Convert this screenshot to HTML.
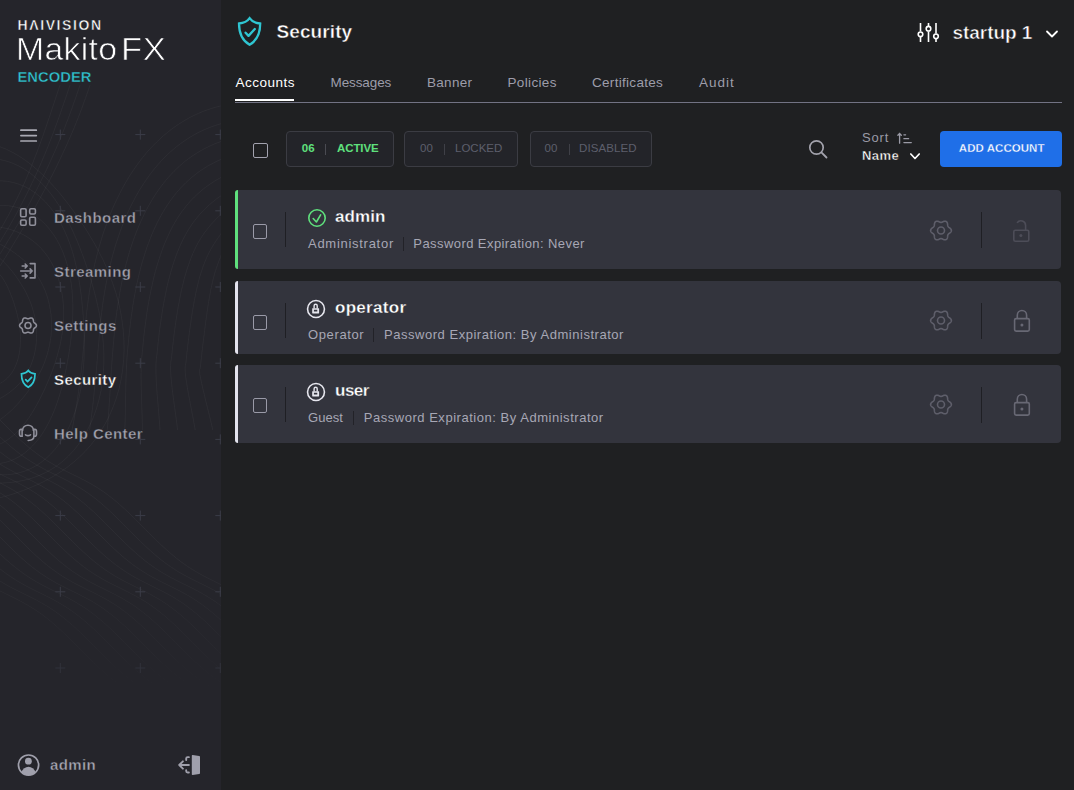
<!DOCTYPE html>
<html><head><meta charset="utf-8">
<style>
html,body{margin:0;padding:0;width:1074px;height:790px;overflow:hidden;background:#1f2022;}
body{position:relative;font-family:"Liberation Sans",sans-serif;}
.t{position:absolute;white-space:nowrap;line-height:1;}
</style></head><body>
<div style="position:absolute;left:0px;top:0px;width:221px;height:790px;background:#25252b"></div>
<div style="position:absolute;left:235px;top:102px;width:827px;height:1px;background:#727384"></div>
<div style="position:absolute;left:235px;top:99px;width:59px;height:2px;background:#ffffff"></div>
<div style="position:absolute;left:253px;top:143px;width:15px;height:15px;box-sizing:border-box;border:1.4px solid #a2a2ae;border-radius:2px"></div>
<div style="position:absolute;left:286px;top:131px;width:108px;height:36px;box-sizing:border-box;border:1px solid #3b3c43;border-radius:4px;background:#232429"></div>
<div style="position:absolute;left:404px;top:131px;width:114px;height:36px;box-sizing:border-box;border:1px solid #3b3c43;border-radius:4px;background:#232429"></div>
<div style="position:absolute;left:529.5px;top:131px;width:122.5px;height:36px;box-sizing:border-box;border:1px solid #3b3c43;border-radius:4px;background:#232429"></div>
<div style="position:absolute;left:325px;top:144px;width:1px;height:11px;background:#4a4b52"></div>
<div style="position:absolute;left:444px;top:144px;width:1px;height:11px;background:#3f4047"></div>
<div style="position:absolute;left:568.5px;top:144px;width:1px;height:11px;background:#3f4047"></div>
<div style="position:absolute;left:940px;top:131px;width:122px;height:36px;background:#1f6fe8;border-radius:4px"></div>
<div style="position:absolute;left:235px;top:190px;width:826px;height:79px;background:#33343d;border-radius:4px"></div>
<div style="position:absolute;left:235px;top:190px;width:3px;height:79px;background:#5fe07d;border-radius:3px 0 0 3px"></div>
<div style="position:absolute;left:253px;top:224px;width:14px;height:15px;box-sizing:border-box;border:1.4px solid #9a9aa8;border-radius:2px"></div>
<div style="position:absolute;left:285px;top:212px;width:1.2px;height:35px;background:#1f1f24"></div>
<div style="position:absolute;left:981px;top:212px;width:1.2px;height:36px;background:#1f1f24"></div>
<div style="position:absolute;left:402.5px;top:236.70000000000002px;width:1px;height:14.5px;background:#222228"></div>
<div style="position:absolute;left:235px;top:281px;width:826px;height:73px;background:#33343d;border-radius:4px"></div>
<div style="position:absolute;left:235px;top:281px;width:3px;height:73px;background:#e4e4ee;border-radius:3px 0 0 3px"></div>
<div style="position:absolute;left:253px;top:315px;width:14px;height:14.5px;box-sizing:border-box;border:1.4px solid #9a9aa8;border-radius:2px"></div>
<div style="position:absolute;left:285px;top:303px;width:1.2px;height:35px;background:#1f1f24"></div>
<div style="position:absolute;left:981px;top:303px;width:1.2px;height:36px;background:#1f1f24"></div>
<div style="position:absolute;left:372.5px;top:327.7px;width:1px;height:14.5px;background:#222228"></div>
<div style="position:absolute;left:235px;top:365px;width:826px;height:78px;background:#33343d;border-radius:4px"></div>
<div style="position:absolute;left:235px;top:365px;width:3px;height:78px;background:#e4e4ee;border-radius:3px 0 0 3px"></div>
<div style="position:absolute;left:253px;top:398px;width:14px;height:14.5px;box-sizing:border-box;border:1.4px solid #9a9aa8;border-radius:2px"></div>
<div style="position:absolute;left:285px;top:387px;width:1.2px;height:35px;background:#1f1f24"></div>
<div style="position:absolute;left:981px;top:387px;width:1.2px;height:36px;background:#1f1f24"></div>
<div style="position:absolute;left:352.5px;top:410.6px;width:1px;height:14.5px;background:#222228"></div>
<svg style="position:absolute;left:0;top:0" width="221" height="790"><defs><linearGradient id="fg" x1="0" y1="0" x2="0" y2="1"><stop offset="0" stop-color="#fff" stop-opacity="0"/><stop offset="0.12" stop-color="#fff" stop-opacity="1"/><stop offset="0.7" stop-color="#fff" stop-opacity="1"/><stop offset="0.9" stop-color="#fff" stop-opacity="0"/></linearGradient><mask id="fm"><rect width="221" height="790" fill="url(#fg)"/></mask></defs><g mask="url(#fm)" stroke="rgba(255,255,255,0.04)" stroke-width="1" fill="none"><path d="M-15.0 266.4 L-13.1 266.5 L-11.1 266.9 L-9.2 267.6 L-7.4 268.5 L-5.6 269.6 L-3.8 270.9 L-2.1 272.5 L-0.5 274.2 L1.0 276.0 L2.5 278.0 L3.9 280.2 L5.2 282.4 L6.4 284.6 L7.6 287.0 L8.7 289.4 L9.7 291.8 L10.7 294.3 L11.7 296.7 L12.6 299.3 L13.5 301.8 L14.3 304.4 L15.1 307.0 L15.9 309.6 L16.7 312.4 L17.4 315.1 L18.0 318.0 L18.6 320.9 L19.2 323.8 L19.6 326.9 L20.0 330.0 L20.3 333.2 L20.5 336.4 L20.5 339.6 L20.4 342.9 L20.2 346.2 L19.9 349.4 L19.4 352.7 L18.8 355.8 L18.0 358.9 L17.1 361.8 L16.1 364.6 L14.9 367.3 L13.7 369.8 L12.3 372.1 L10.8 374.2 L9.2 376.2 L7.6 377.9 L6.0 379.4 L4.2 380.8 L2.5 382.0 L0.7 383.0 L-1.0 383.8 L-2.8 384.5 L-4.6 385.1 L-6.3 385.5 L-8.1 385.8 L-9.8 386.1 L-11.6 386.3 L-13.3 386.4 L-15.0 386.4"/><path d="M-15.0 250.5 L-12.4 251.3 L-9.8 252.3 L-7.3 253.5 L-4.8 254.9 L-2.5 256.6 L-0.2 258.4 L2.0 260.3 L4.2 262.3 L6.2 264.5 L8.3 266.7 L10.2 269.0 L12.1 271.3 L14.0 273.7 L15.8 276.2 L17.6 278.7 L19.4 281.4 L21.1 284.1 L22.8 286.8 L24.5 289.7 L26.1 292.7 L27.6 295.9 L29.1 299.2 L30.5 302.6 L31.8 306.1 L32.9 309.8 L34.0 313.6 L34.9 317.6 L35.6 321.6 L36.1 325.8 L36.5 330.0 L36.6 334.3 L36.6 338.5 L36.3 342.8 L35.8 347.0 L35.1 351.1 L34.2 355.1 L33.1 359.0 L31.8 362.8 L30.4 366.4 L28.8 369.7 L27.1 372.9 L25.2 375.9 L23.3 378.7 L21.3 381.3 L19.2 383.8 L17.1 386.0 L14.9 388.0 L12.7 389.9 L10.5 391.7 L8.3 393.3 L6.0 394.8 L3.8 396.3 L1.5 397.6 L-0.8 398.8 L-3.1 400.0 L-5.4 401.1 L-7.7 402.1 L-10.1 403.0 L-12.5 403.8 L-15.0 404.5"/><path d="M-15.0 238.3 L-11.8 239.2 L-8.7 240.3 L-5.6 241.5 L-2.6 242.9 L0.4 244.3 L3.3 245.9 L6.2 247.5 L9.1 249.2 L11.9 251.1 L14.8 253.0 L17.6 255.1 L20.4 257.3 L23.2 259.7 L25.9 262.2 L28.6 264.9 L31.3 267.8 L33.8 271.0 L36.3 274.4 L38.7 278.0 L40.9 281.8 L43.0 285.9 L44.9 290.2 L46.6 294.7 L48.0 299.4 L49.3 304.3 L50.2 309.3 L51.0 314.4 L51.4 319.6 L51.5 324.8 L51.4 330.0 L51.1 335.2 L50.4 340.3 L49.5 345.3 L48.4 350.1 L47.1 354.8 L45.6 359.4 L44.0 363.8 L42.2 368.0 L40.2 372.0 L38.2 375.8 L36.1 379.5 L33.9 383.0 L31.7 386.4 L29.4 389.6 L27.0 392.7 L24.7 395.7 L22.3 398.7 L19.8 401.5 L17.3 404.3 L14.8 407.0 L12.2 409.6 L9.5 412.1 L6.7 414.5 L3.9 416.8 L1.0 418.9 L-2.1 420.9 L-5.2 422.6 L-8.4 424.1 L-11.6 425.4 L-15.0 426.3"/><path d="M-15.0 225.6 L-11.2 225.8 L-7.4 226.1 L-3.6 226.6 L0.2 227.2 L4.0 227.9 L7.8 228.8 L11.6 229.9 L15.5 231.3 L19.3 232.8 L23.2 234.7 L27.0 236.8 L30.7 239.3 L34.4 242.1 L38.0 245.2 L41.4 248.7 L44.7 252.5 L47.8 256.7 L50.7 261.2 L53.3 266.1 L55.6 271.2 L57.7 276.6 L59.5 282.2 L61.0 288.0 L62.1 293.9 L62.9 299.9 L63.5 306.0 L63.7 312.0 L63.6 318.1 L63.3 324.1 L62.7 330.0 L61.8 335.8 L60.8 341.5 L59.6 347.0 L58.2 352.4 L56.7 357.7 L55.1 362.8 L53.4 367.8 L51.6 372.7 L49.7 377.5 L47.7 382.2 L45.7 386.8 L43.6 391.4 L41.4 395.9 L39.2 400.3 L36.8 404.7 L34.4 409.0 L31.8 413.3 L29.1 417.4 L26.2 421.4 L23.2 425.3 L20.0 429.0 L16.6 432.4 L13.1 435.6 L9.5 438.5 L5.6 441.1 L1.7 443.3 L-2.4 445.0 L-6.5 446.3 L-10.7 447.2 L-15.0 447.6"/><path d="M-15.0 207.0 L-10.4 206.2 L-5.7 205.7 L-1.0 205.4 L3.8 205.4 L8.7 205.8 L13.5 206.6 L18.4 207.8 L23.2 209.4 L27.9 211.5 L32.6 214.1 L37.1 217.2 L41.4 220.7 L45.6 224.7 L49.5 229.2 L53.2 234.1 L56.6 239.3 L59.6 245.0 L62.4 250.9 L64.8 257.1 L66.9 263.5 L68.6 270.1 L70.1 276.7 L71.2 283.5 L72.0 290.2 L72.5 297.0 L72.8 303.8 L72.8 310.4 L72.7 317.0 L72.4 323.6 L71.9 330.0 L71.2 336.4 L70.5 342.6 L69.6 348.9 L68.7 355.0 L67.6 361.1 L66.5 367.2 L65.2 373.3 L63.9 379.4 L62.4 385.4 L60.7 391.5 L58.9 397.5 L56.9 403.5 L54.7 409.4 L52.3 415.2 L49.6 420.9 L46.7 426.4 L43.6 431.7 L40.2 436.8 L36.5 441.5 L32.6 445.9 L28.4 449.9 L24.1 453.4 L19.5 456.5 L14.8 459.0 L10.0 461.0 L5.0 462.5 L0.0 463.4 L-5.0 463.8 L-10.0 463.7 L-15.0 463.0"/><path d="M-15.0 182.5 L-9.4 181.5 L-3.7 180.9 L2.1 180.9 L7.9 181.4 L13.6 182.6 L19.3 184.3 L24.8 186.6 L30.3 189.6 L35.5 193.1 L40.5 197.2 L45.3 201.8 L49.8 206.9 L54.0 212.4 L57.8 218.3 L61.4 224.5 L64.6 231.0 L67.5 237.7 L70.1 244.6 L72.4 251.6 L74.4 258.7 L76.1 265.9 L77.7 273.0 L79.0 280.2 L80.1 287.3 L81.1 294.4 L81.9 301.6 L82.6 308.7 L83.2 315.8 L83.6 322.9 L84.0 330.0 L84.2 337.2 L84.3 344.4 L84.2 351.7 L84.0 359.0 L83.5 366.5 L82.9 373.9 L82.0 381.4 L80.8 388.9 L79.3 396.3 L77.5 403.7 L75.3 411.0 L72.8 418.1 L70.0 425.0 L66.7 431.6 L63.2 437.9 L59.2 443.8 L55.0 449.3 L50.4 454.3 L45.6 458.8 L40.5 462.8 L35.3 466.2 L29.8 469.0 L24.3 471.3 L18.6 472.9 L13.0 474.1 L7.3 474.7 L1.6 474.8 L-4.0 474.4 L-9.5 473.7 L-15.0 472.5"/><path d="M-15.0 158.7 L-8.4 158.6 L-1.8 159.2 L4.7 160.6 L11.1 162.6 L17.4 165.3 L23.5 168.6 L29.4 172.5 L35.0 177.0 L40.4 182.0 L45.5 187.4 L50.3 193.1 L54.8 199.2 L59.0 205.5 L63.0 212.1 L66.7 218.8 L70.2 225.6 L73.4 232.5 L76.5 239.5 L79.4 246.6 L82.1 253.7 L84.7 260.8 L87.2 268.1 L89.5 275.4 L91.8 282.8 L93.9 290.3 L95.9 297.9 L97.7 305.7 L99.4 313.6 L100.8 321.7 L102.0 330.0 L102.9 338.4 L103.6 347.0 L103.9 355.6 L103.8 364.4 L103.3 373.1 L102.3 381.9 L101.0 390.6 L99.1 399.2 L96.8 407.5 L94.0 415.7 L90.7 423.5 L87.0 430.9 L82.9 438.0 L78.4 444.5 L73.6 450.6 L68.4 456.1 L63.0 461.1 L57.3 465.5 L51.5 469.3 L45.5 472.6 L39.4 475.4 L33.3 477.7 L27.2 479.5 L21.0 480.9 L14.9 482.0 L8.8 482.6 L2.8 483.0 L-3.2 483.1 L-9.1 483.0 L-15.0 482.7"/><path d="M-15.0 142.9 L-7.8 144.4 L-0.7 146.5 L6.3 149.2 L13.0 152.6 L19.6 156.4 L25.9 160.7 L32.0 165.3 L37.8 170.3 L43.5 175.6 L48.9 181.1 L54.1 186.8 L59.2 192.6 L64.0 198.6 L68.8 204.8 L73.4 211.0 L77.9 217.4 L82.3 223.9 L86.7 230.6 L90.9 237.5 L95.0 244.5 L98.9 251.9 L102.8 259.4 L106.4 267.3 L109.8 275.4 L112.9 283.9 L115.8 292.6 L118.3 301.6 L120.4 310.8 L122.0 320.3 L123.2 330.0 L123.9 339.8 L124.1 349.7 L123.7 359.6 L122.7 369.4 L121.2 379.1 L119.1 388.6 L116.4 397.9 L113.2 406.8 L109.5 415.4 L105.4 423.5 L100.8 431.2 L95.9 438.5 L90.7 445.2 L85.2 451.4 L79.4 457.1 L73.5 462.3 L67.5 467.1 L61.3 471.4 L55.1 475.3 L48.9 478.9 L42.6 482.2 L36.3 485.1 L30.0 487.8 L23.7 490.3 L17.4 492.6 L11.0 494.6 L4.6 496.5 L-1.9 498.2 L-8.4 499.7 L-15.0 500.9"/><path d="M0.0 420.0 L5.2 425.2 L10.4 430.4 L15.6 435.5 L20.8 440.3 L26.0 444.9 L31.2 449.3 L36.4 453.3 L41.6 457.0 L46.8 460.5 L52.0 463.6 L57.2 466.6 L62.4 469.3 L67.6 471.9 L72.8 474.5 L78.0 477.0 L83.2 479.7 L88.4 482.4 L93.6 485.4 L98.8 488.6 L104.0 492.1 L109.2 495.9 L114.4 500.0 L119.6 504.4 L124.8 509.1 L130.0 514.0 L135.2 519.0 L140.4 524.2 L145.6 529.5 L150.8 534.7 L156.0 539.9 L161.2 544.9 L166.4 549.7 L171.6 554.2 L176.8 558.5 L182.0 562.5 L187.2 566.2 L192.4 569.5 L197.6 572.6 L202.8 575.5 L208.0 578.2 L213.2 580.8 L218.4 583.4 L223.6 585.9 L228.8 588.6"/><path d="M0.0 436.9 L5.2 441.7 L10.4 446.3 L15.6 450.6 L20.8 454.6 L26.0 458.3 L31.2 461.7 L36.4 464.8 L41.6 467.7 L46.8 470.5 L52.0 473.1 L57.2 475.6 L62.4 478.2 L67.6 480.8 L72.8 483.6 L78.0 486.6 L83.2 489.9 L88.4 493.4 L93.6 497.2 L98.8 501.3 L104.0 505.8 L109.2 510.5 L114.4 515.4 L119.6 520.5 L124.8 525.7 L130.0 530.9 L135.2 536.1 L140.4 541.3 L145.6 546.3 L150.8 551.1 L156.0 555.6 L161.2 559.8 L166.4 563.8 L171.6 567.4 L176.8 570.8 L182.0 573.9 L187.2 576.7 L192.4 579.4 L197.6 582.0 L202.8 584.5 L208.0 587.1 L213.2 589.8 L218.4 592.6 L223.6 595.7 L228.8 599.0"/><path d="M0.0 451.9 L5.2 455.9 L10.4 459.6 L15.6 462.9 L20.8 466.1 L26.0 468.9 L31.2 471.7 L36.4 474.2 L41.6 476.8 L46.8 479.4 L52.0 482.0 L57.2 484.8 L62.4 487.8 L67.6 491.1 L72.8 494.7 L78.0 498.5 L83.2 502.7 L88.4 507.1 L93.6 511.8 L98.8 516.8 L104.0 521.9 L109.2 527.1 L114.4 532.3 L119.6 537.6 L124.8 542.7 L130.0 547.7 L135.2 552.4 L140.4 556.9 L145.6 561.2 L150.8 565.1 L156.0 568.7 L161.2 572.0 L166.4 575.1 L171.6 577.9 L176.8 580.6 L182.0 583.2 L187.2 585.7 L192.4 588.3 L197.6 591.0 L202.8 593.8 L208.0 596.9 L213.2 600.2 L218.4 603.8 L223.6 607.7 L228.8 612.0"/><path d="M0.0 464.2 L5.2 467.3 L10.4 470.1 L15.6 472.8 L20.8 475.4 L26.0 478.0 L31.2 480.5 L36.4 483.2 L41.6 486.0 L46.8 489.1 L52.0 492.4 L57.2 495.9 L62.4 499.8 L67.6 504.0 L72.8 508.5 L78.0 513.2 L83.2 518.2 L88.4 523.3 L93.6 528.5 L98.8 533.8 L104.0 539.0 L109.2 544.1 L114.4 549.1 L119.6 553.8 L124.8 558.3 L130.0 562.5 L135.2 566.4 L140.4 569.9 L145.6 573.2 L150.8 576.3 L156.0 579.1 L161.2 581.8 L166.4 584.3 L171.6 586.9 L176.8 589.5 L182.0 592.2 L187.2 595.0 L192.4 598.1 L197.6 601.5 L202.8 605.1 L208.0 609.1 L213.2 613.3 L218.4 617.8 L223.6 622.6 L228.8 627.6"/><path d="M0.0 474.0 L5.2 476.6 L10.4 479.1 L15.6 481.7 L20.8 484.4 L26.0 487.2 L31.2 490.3 L36.4 493.6 L41.6 497.2 L46.8 501.1 L52.0 505.4 L57.2 509.9 L62.4 514.6 L67.6 519.6 L72.8 524.7 L78.0 529.9 L83.2 535.2 L88.4 540.4 L93.6 545.5 L98.8 550.5 L104.0 555.2 L109.2 559.6 L114.4 563.8 L119.6 567.6 L124.8 571.2 L130.0 574.5 L135.2 577.5 L140.4 580.3 L145.6 582.9 L150.8 585.5 L156.0 588.1 L161.2 590.7 L166.4 593.4 L171.6 596.2 L176.8 599.4 L182.0 602.7 L187.2 606.4 L192.4 610.4 L197.6 614.7 L202.8 619.2 L208.0 624.0 L213.2 629.0 L218.4 634.2 L223.6 639.4 L228.8 644.7"/><path d="M0.0 482.9 L5.2 485.6 L10.4 488.5 L15.6 491.5 L20.8 494.9 L26.0 498.5 L31.2 502.5 L36.4 506.7 L41.6 511.2 L46.8 516.0 L52.0 521.0 L57.2 526.1 L62.4 531.4 L67.6 536.6 L72.8 541.8 L78.0 546.9 L83.2 551.8 L88.4 556.5 L93.6 561.0 L98.8 565.1 L104.0 568.9 L109.2 572.4 L114.4 575.7 L119.6 578.7 L124.8 581.5 L130.0 584.1 L135.2 586.7 L140.4 589.2 L145.6 591.8 L150.8 594.6 L156.0 597.5 L161.2 600.6 L166.4 604.0 L171.6 607.7 L176.8 611.7 L182.0 616.0 L187.2 620.6 L192.4 625.4 L197.6 630.5 L202.8 635.6 L208.0 640.9 L213.2 646.1 L218.4 651.3 L223.6 656.4 L228.8 661.2"/><path d="M0.0 492.8 L5.2 496.1 L10.4 499.8 L15.6 503.8 L20.8 508.1 L26.0 512.6 L31.2 517.4 L36.4 522.4 L41.6 527.6 L46.8 532.8 L52.0 538.1 L57.2 543.3 L62.4 548.3 L67.6 553.2 L72.8 557.9 L78.0 562.3 L83.2 566.4 L88.4 570.2 L93.6 573.7 L98.8 576.9 L104.0 579.9 L109.2 582.7 L114.4 585.3 L119.6 587.8 L124.8 590.4 L130.0 593.0 L135.2 595.8 L140.4 598.7 L145.6 601.8 L150.8 605.3 L156.0 609.0 L161.2 613.0 L166.4 617.4 L171.6 622.0 L176.8 626.8 L182.0 631.9 L187.2 637.0 L192.4 642.3 L197.6 647.5 L202.8 652.7 L208.0 657.8 L213.2 662.6 L218.4 667.2 L223.6 671.6 L228.8 675.6"/><path d="M0.0 505.1 L5.2 509.4 L10.4 514.0 L15.6 518.8 L20.8 523.8 L26.0 529.0 L31.2 534.2 L36.4 539.5 L41.6 544.7 L46.8 549.7 L52.0 554.6 L57.2 559.3 L62.4 563.6 L67.6 567.7 L72.8 571.5 L78.0 574.9 L83.2 578.1 L88.4 581.1 L93.6 583.8 L98.8 586.5 L104.0 589.0 L109.2 591.6 L114.4 594.2 L119.6 596.9 L124.8 599.9 L130.0 603.1 L135.2 606.5 L140.4 610.3 L145.6 614.4 L150.8 618.7 L156.0 623.4 L161.2 628.2 L166.4 633.3 L171.6 638.5 L176.8 643.7 L182.0 649.0 L187.2 654.1 L192.4 659.2 L197.6 664.0 L202.8 668.6 L208.0 672.9 L213.2 676.9 L218.4 680.6 L223.6 684.0 L228.8 687.1"/><path d="M0.0 520.2 L5.2 525.3 L10.4 530.4 L15.6 535.7 L20.8 540.9 L26.0 546.1 L31.2 551.1 L36.4 556.0 L41.6 560.6 L46.8 565.0 L52.0 569.0 L57.2 572.7 L62.4 576.2 L67.6 579.3 L72.8 582.3 L78.0 585.0 L83.2 587.6 L88.4 590.2 L93.6 592.7 L98.8 595.4 L104.0 598.1 L109.2 601.1 L114.4 604.3 L119.6 607.8 L124.8 611.6 L130.0 615.7 L135.2 620.1 L140.4 624.7 L145.6 629.6 L150.8 634.7 L156.0 639.9 L161.2 645.2 L166.4 650.4 L171.6 655.5 L176.8 660.6 L182.0 665.4 L187.2 669.9 L192.4 674.2 L197.6 678.2 L202.8 681.9 L208.0 685.2 L213.2 688.4 L218.4 691.2 L223.6 694.0 L228.8 696.6"/><path d="M0.0 537.1 L5.2 542.3 L10.4 547.5 L15.6 552.5 L20.8 557.4 L26.0 562.0 L31.2 566.3 L36.4 570.3 L41.6 574.0 L46.8 577.4 L52.0 580.6 L57.2 583.5 L62.4 586.2 L67.6 588.8 L72.8 591.4 L78.0 593.9 L83.2 596.6 L88.4 599.3 L93.6 602.3 L98.8 605.6 L104.0 609.1 L109.2 612.9 L114.4 617.0 L119.6 621.4 L124.8 626.1 L130.0 631.0 L135.2 636.1 L140.4 641.3 L145.6 646.6 L150.8 651.8 L156.0 657.0 L161.2 662.0 L166.4 666.7 L171.6 671.3 L176.8 675.5 L182.0 679.5 L187.2 683.1 L192.4 686.5 L197.6 689.6 L202.8 692.4 L208.0 695.1 L213.2 697.7 L218.4 700.3 L223.6 702.8 L228.8 705.5"/><path d="M0.0 553.9 L5.2 558.8 L10.4 563.3 L15.6 567.6 L20.8 571.6 L26.0 575.3 L31.2 578.7 L36.4 581.8 L41.6 584.7 L46.8 587.4 L52.0 590.0 L57.2 592.5 L62.4 595.1 L67.6 597.7 L72.8 600.6 L78.0 603.6 L83.2 606.8 L88.4 610.4 L93.6 614.2 L98.8 618.4 L104.0 622.8 L109.2 627.5 L114.4 632.4 L119.6 637.6 L124.8 642.8 L130.0 648.0 L135.2 653.2 L140.4 658.4 L145.6 663.4 L150.8 668.1 L156.0 672.6 L161.2 676.9 L166.4 680.8 L171.6 684.4 L176.8 687.7 L182.0 690.8 L187.2 693.6 L192.4 696.3 L197.6 698.9 L202.8 701.4 L208.0 704.0 L213.2 706.7 L218.4 709.5 L223.6 712.6 L228.8 715.9"/><path d="M0.0 568.9 L5.2 572.9 L10.4 576.5 L15.6 579.9 L20.8 583.0 L26.0 585.9 L31.2 588.6 L36.4 591.2 L41.6 593.7 L46.8 596.3 L52.0 598.9 L57.2 601.8 L62.4 604.8 L67.6 608.1 L72.8 611.7 L78.0 615.5 L83.2 619.7 L88.4 624.2 L93.6 628.9 L98.8 633.9 L104.0 639.0 L109.2 644.2 L114.4 649.4 L119.6 654.7 L124.8 659.8 L130.0 664.7 L135.2 669.5 L140.4 674.0 L145.6 678.2 L150.8 682.1 L156.0 685.6 L161.2 688.9 L166.4 692.0 L171.6 694.8 L176.8 697.5 L182.0 700.1 L187.2 702.6 L192.4 705.2 L197.6 707.9 L202.8 710.8 L208.0 713.8 L213.2 717.2 L218.4 720.8 L223.6 724.8 L228.8 729.0"/><path d="M0.0 581.1 L5.2 584.2 L10.4 587.1 L15.6 589.7 L20.8 592.3 L26.0 594.9 L31.2 597.4 L36.4 600.1 L41.6 603.0 L46.8 606.0 L52.0 609.3 L57.2 612.9 L62.4 616.8 L67.6 621.1 L72.8 625.5 L78.0 630.3 L83.2 635.3 L88.4 640.4 L93.6 645.6 L98.8 650.9 L104.0 656.1 L109.2 661.2 L114.4 666.1 L119.6 670.9 L124.8 675.3 L130.0 679.5 L135.2 683.3 L140.4 686.9 L145.6 690.2 L150.8 693.2 L156.0 696.0 L161.2 698.7 L166.4 701.2 L171.6 703.8 L176.8 706.4 L182.0 709.1 L187.2 712.0 L192.4 715.1 L197.6 718.4 L202.8 722.1 L208.0 726.1 L213.2 730.4 L218.4 734.9 L223.6 739.7 L228.8 744.7"/><path d="M0.0 590.9 L5.2 593.5 L10.4 596.0 L15.6 598.6 L20.8 601.3 L26.0 604.2 L31.2 607.3 L36.4 610.6 L41.6 614.2 L46.8 618.2 L52.0 622.4 L57.2 626.9 L62.4 631.7 L67.6 636.7 L72.8 641.8 L78.0 647.1 L83.2 652.3 L88.4 657.5 L93.6 662.6 L98.8 667.5 L104.0 672.2 L109.2 676.7 L114.4 680.8 L119.6 684.6 L124.8 688.2 L130.0 691.4 L135.2 694.4 L140.4 697.2 L145.6 699.8 L150.8 702.4 L156.0 705.0 L161.2 707.6 L166.4 710.3 L171.6 713.2 L176.8 716.3 L182.0 719.7 L187.2 723.4 L192.4 727.4 L197.6 731.7 L202.8 736.3 L208.0 741.1 L213.2 746.1 L218.4 751.3 L223.6 756.5 L228.8 761.8"/><path d="M225.0 105.0 L220.5 106.0 L216.1 107.1 L211.7 108.4 L207.4 109.8 L203.1 111.4 L198.9 113.2 L194.7 115.1 L190.6 117.1 L186.6 119.3 L182.6 121.7 L178.7 124.2 L174.8 126.8 L171.0 129.6 L167.3 132.6 L163.6 135.6 L160.0 138.9 L156.4 142.3 L152.9 145.8 L149.5 149.4 L146.2 153.2 L142.9 157.2 L139.7 161.3 L136.6 165.5 L133.6 169.9 L130.6 174.4 L127.7 179.0 L124.9 183.8 L122.2 188.7 L119.6 193.8 L117.0 199.0 L114.5 204.3 L112.1 209.7 L109.8 215.3 L107.6 221.1 L105.5 226.9 L103.4 232.9 L101.5 239.0 L99.6 245.2 L97.9 251.6 L96.2 258.1 L94.6 264.7 L93.2 271.5 L91.8 278.4 L90.5 285.4 L89.3 292.5 L88.3 299.8 L87.3 307.1 L86.4 314.6 L85.7 322.3 L85.0 330.0 L84.2 339.8 L83.4 349.2 L82.5 358.3 L81.6 367.0 L80.7 375.5 L79.6 383.8 L78.5 391.8 L77.4 399.6 L76.1 407.3 L74.8 415.0 L73.5 422.5 L72.0 430.0"/><path d="M225.0 122.6 L221.0 123.7 L217.0 124.9 L213.1 126.2 L209.3 127.6 L205.5 129.2 L201.7 130.9 L198.0 132.7 L194.3 134.7 L190.7 136.8 L187.2 139.0 L183.7 141.4 L180.2 143.9 L176.8 146.5 L173.5 149.2 L170.2 152.1 L167.0 155.1 L163.8 158.2 L160.7 161.5 L157.7 164.9 L154.7 168.4 L151.8 172.1 L149.0 175.8 L146.2 179.8 L143.5 183.8 L140.8 188.0 L138.2 192.3 L135.7 196.7 L133.3 201.3 L130.9 206.0 L128.6 210.8 L126.4 215.8 L124.3 220.8 L122.2 226.1 L120.2 231.4 L118.3 236.9 L116.4 242.5 L114.7 248.2 L113.0 254.1 L111.4 260.1 L109.9 266.2 L108.4 272.5 L107.1 278.9 L105.8 285.4 L104.6 292.1 L103.5 298.9 L102.5 305.8 L101.6 312.9 L100.8 320.0 L100.0 327.4 L99.4 334.8 L98.7 343.5 L97.9 352.0 L97.2 360.3 L96.5 368.5 L95.8 376.5 L95.0 384.4 L94.2 392.1 L93.4 399.8 L92.6 407.4 L91.6 415.0 L90.7 422.5 L89.6 430.0"/><path d="M225.0 140.2 L221.5 141.3 L218.0 142.6 L214.6 143.9 L211.2 145.4 L207.8 147.0 L204.5 148.6 L201.3 150.4 L198.0 152.3 L194.9 154.3 L191.7 156.4 L188.7 158.6 L185.6 160.9 L182.7 163.3 L179.7 165.9 L176.9 168.5 L174.0 171.3 L171.3 174.2 L168.5 177.2 L165.9 180.3 L163.2 183.6 L160.7 186.9 L158.2 190.4 L155.7 194.0 L153.4 197.7 L151.0 201.6 L148.8 205.5 L146.5 209.6 L144.4 213.8 L142.3 218.2 L140.3 222.6 L138.3 227.2 L136.4 231.9 L134.6 236.8 L132.8 241.8 L131.1 246.9 L129.4 252.1 L127.9 257.5 L126.4 263.0 L124.9 268.6 L123.5 274.4 L122.2 280.3 L121.0 286.3 L119.9 292.5 L118.8 298.8 L117.8 305.3 L116.8 311.8 L115.9 318.6 L115.2 325.4 L114.4 332.4 L113.8 339.6 L113.1 347.2 L112.5 354.8 L111.9 362.3 L111.4 369.9 L110.9 377.4 L110.4 384.9 L110.0 392.5 L109.5 400.0 L109.0 407.5 L108.5 415.0 L107.9 422.5 L107.2 430.0"/><path d="M225.0 157.8 L222.0 159.0 L219.0 160.3 L216.0 161.7 L213.1 163.2 L210.2 164.7 L207.3 166.3 L204.5 168.1 L201.7 169.9 L199.0 171.7 L196.3 173.7 L193.7 175.8 L191.1 177.9 L188.5 180.2 L186.0 182.5 L183.5 185.0 L181.1 187.5 L178.7 190.2 L176.3 192.9 L174.0 195.8 L171.8 198.7 L169.6 201.8 L167.4 205.0 L165.3 208.3 L163.2 211.7 L161.2 215.2 L159.3 218.8 L157.3 222.5 L155.5 226.4 L153.7 230.4 L151.9 234.5 L150.2 238.7 L148.5 243.1 L146.9 247.5 L145.4 252.1 L143.9 256.9 L142.4 261.7 L141.0 266.7 L139.7 271.8 L138.4 277.1 L137.2 282.5 L136.0 288.0 L134.9 293.7 L133.9 299.5 L132.9 305.5 L132.0 311.6 L131.1 317.9 L130.3 324.3 L129.5 330.8 L128.8 337.5 L128.2 344.4 L127.5 350.9 L127.0 357.5 L126.6 364.4 L126.3 371.3 L126.0 378.4 L125.8 385.6 L125.7 392.8 L125.5 400.2 L125.4 407.6 L125.3 415.0 L125.1 422.5 L124.8 430.0"/><path d="M225.0 175.4 L222.4 176.7 L219.9 178.1 L217.4 179.5 L214.9 180.9 L212.5 182.5 L210.1 184.1 L207.8 185.7 L205.4 187.4 L203.1 189.2 L200.9 191.1 L198.7 193.0 L196.5 195.0 L194.3 197.0 L192.2 199.2 L190.1 201.4 L188.1 203.8 L186.1 206.2 L184.1 208.7 L182.2 211.2 L180.3 213.9 L178.4 216.7 L176.6 219.6 L174.9 222.5 L173.1 225.6 L171.4 228.8 L169.8 232.1 L168.2 235.5 L166.6 239.0 L165.0 242.6 L163.5 246.3 L162.1 250.2 L160.7 254.2 L159.3 258.3 L158.0 262.5 L156.7 266.8 L155.4 271.3 L154.2 275.9 L153.1 280.7 L152.0 285.6 L150.9 290.6 L149.9 295.8 L148.9 301.1 L147.9 306.6 L147.0 312.2 L146.2 318.0 L145.4 323.9 L144.6 330.0 L143.9 336.2 L143.2 342.6 L142.6 349.2 L142.0 354.6 L141.5 360.3 L141.2 366.4 L141.1 372.7 L141.1 379.3 L141.2 386.1 L141.4 393.2 L141.6 400.3 L141.8 407.6 L142.1 415.0 L142.3 422.5 L142.4 430.0"/><path d="M225.0 193.0 L222.9 194.4 L220.9 195.8 L218.8 197.3 L216.8 198.7 L214.9 200.2 L212.9 201.8 L211.0 203.4 L209.1 205.0 L207.3 206.7 L205.4 208.4 L203.7 210.2 L201.9 212.0 L200.2 213.9 L198.4 215.9 L196.8 217.9 L195.1 220.0 L193.5 222.1 L191.9 224.4 L190.4 226.7 L188.8 229.1 L187.3 231.6 L185.9 234.1 L184.4 236.8 L183.0 239.5 L181.6 242.4 L180.3 245.3 L179.0 248.4 L177.7 251.5 L176.4 254.8 L175.2 258.2 L174.0 261.7 L172.8 265.3 L171.7 269.0 L170.6 272.8 L169.5 276.8 L168.4 280.9 L167.4 285.2 L166.4 289.6 L165.5 294.1 L164.6 298.8 L163.7 303.6 L162.8 308.5 L162.0 313.7 L161.2 318.9 L160.4 324.4 L159.6 329.9 L158.9 335.7 L158.3 341.6 L157.6 347.7 L157.0 354.0 L156.4 358.3 L156.0 363.1 L155.9 368.4 L156.0 374.1 L156.2 380.3 L156.6 386.8 L157.1 393.5 L157.7 400.5 L158.3 407.7 L158.9 415.1 L159.5 422.5 L160.0 430.0"/><path d="M225.0 210.6 L223.4 212.1 L221.8 213.5 L220.3 215.0 L218.7 216.5 L217.2 218.0 L215.7 219.5 L214.3 221.0 L212.8 222.6 L211.4 224.1 L210.0 225.7 L208.6 227.4 L207.3 229.1 L206.0 230.8 L204.7 232.5 L203.4 234.3 L202.2 236.2 L200.9 238.1 L199.7 240.1 L198.5 242.1 L197.3 244.2 L196.2 246.4 L195.1 248.7 L194.0 251.0 L192.9 253.5 L191.8 256.0 L190.8 258.6 L189.8 261.3 L188.8 264.1 L187.8 267.0 L186.8 270.0 L185.9 273.1 L184.9 276.4 L184.0 279.7 L183.2 283.2 L182.3 286.8 L181.4 290.5 L180.6 294.4 L179.8 298.4 L179.0 302.6 L178.2 306.9 L177.5 311.3 L176.7 315.9 L176.0 320.7 L175.3 325.6 L174.6 330.7 L173.9 336.0 L173.3 341.4 L172.6 347.0 L172.0 352.8 L171.4 358.8 L170.8 362.0 L170.6 365.9 L170.6 370.4 L170.9 375.6 L171.4 381.2 L172.0 387.4 L172.8 393.9 L173.7 400.7 L174.7 407.8 L175.7 415.1 L176.7 422.5 L177.6 430.0"/><path d="M225.0 228.2 L223.9 229.8 L222.8 231.3 L221.7 232.8 L220.6 234.3 L219.6 235.8 L218.5 237.2 L217.5 238.7 L216.5 240.1 L215.5 241.6 L214.6 243.1 L213.6 244.6 L212.7 246.1 L211.8 247.6 L210.9 249.2 L210.0 250.8 L209.2 252.4 L208.3 254.1 L207.5 255.8 L206.7 257.6 L205.9 259.4 L205.1 261.3 L204.3 263.3 L203.5 265.3 L202.8 267.4 L202.0 269.6 L201.3 271.8 L200.6 274.2 L199.8 276.6 L199.1 279.2 L198.4 281.8 L197.8 284.6 L197.1 287.5 L196.4 290.5 L195.7 293.6 L195.1 296.8 L194.4 300.2 L193.8 303.7 L193.2 307.3 L192.5 311.1 L191.9 315.0 L191.3 319.1 L190.7 323.4 L190.0 327.8 L189.4 332.3 L188.8 337.1 L188.2 342.0 L187.6 347.1 L187.0 352.4 L186.4 357.9 L185.8 363.6 L185.3 365.7 L185.1 368.7 L185.3 372.5 L185.7 377.0 L186.5 382.2 L187.4 387.9 L188.5 394.2 L189.8 400.9 L191.1 407.9 L192.5 415.1 L193.9 422.5 L195.2 430.0"/><path d="M225.0 245.8 L224.3 247.4 L223.7 249.0 L223.1 250.6 L222.5 252.1 L221.9 253.5 L221.3 254.9 L220.8 256.3 L220.2 257.7 L219.7 259.1 L219.2 260.4 L218.6 261.8 L218.1 263.1 L217.6 264.5 L217.2 265.8 L216.7 267.2 L216.2 268.6 L215.8 270.1 L215.3 271.5 L214.8 273.0 L214.4 274.6 L214.0 276.2 L213.5 277.8 L213.1 279.5 L212.7 281.3 L212.2 283.2 L211.8 285.1 L211.4 287.1 L210.9 289.2 L210.5 291.4 L210.1 293.7 L209.6 296.1 L209.2 298.6 L208.8 301.2 L208.3 303.9 L207.9 306.8 L207.4 309.8 L207.0 312.9 L206.5 316.2 L206.0 319.6 L205.6 323.1 L205.1 326.9 L204.6 330.8 L204.1 334.8 L203.6 339.0 L203.0 343.5 L202.5 348.1 L201.9 352.8 L201.4 357.8 L200.8 363.0 L200.2 368.4 L199.7 369.4 L199.6 371.4 L199.9 374.5 L200.6 378.4 L201.6 383.1 L202.8 388.6 L204.3 394.6 L205.8 401.1 L207.5 407.9 L209.3 415.1 L211.1 422.5 L212.8 430.0"/><path d="M60.0 85.0 L58.5 89.5 L57.0 94.1 L55.5 98.6 L54.0 103.3 L52.4 107.9 L50.9 112.6 L49.3 117.3 L47.7 122.0 L46.1 126.7 L44.4 131.5 L42.8 136.3 L41.0 141.1 L39.3 145.9 L37.5 150.8 L35.6 155.6 L33.7 160.5 L31.8 165.4 L29.8 170.3 L27.7 175.2 L25.6 180.2 L23.4 185.1 L21.1 190.1 L18.7 195.1 L16.3 200.0 L13.8 205.0 L11.2 210.0 L8.6 215.0 L5.8 220.0 L3.0 225.0 L0.0 230.0"/><path d="M70.0 85.0 L68.5 89.5 L67.0 94.1 L65.4 98.7 L63.8 103.3 L62.2 107.9 L60.6 112.7 L58.9 117.4 L57.2 122.2 L55.4 127.0 L53.6 131.9 L51.8 136.9 L49.8 141.8 L47.8 146.9 L45.8 152.0 L43.6 157.1 L41.4 162.3 L39.1 167.6 L36.7 172.9 L34.3 178.3 L31.7 183.7 L29.0 189.3 L26.3 194.8 L23.4 200.5 L20.4 206.2 L17.3 212.0 L14.1 217.8 L10.8 223.8 L7.3 229.8 L3.7 235.8 L0.0 242.0"/><path d="M80.0 85.0 L78.5 89.5 L76.9 94.1 L75.4 98.7 L73.7 103.3 L72.1 108.0 L70.3 112.8 L68.6 117.6 L66.7 122.4 L64.8 127.4 L62.8 132.4 L60.8 137.5 L58.6 142.6 L56.4 147.9 L54.0 153.2 L51.6 158.6 L49.1 164.1 L46.5 169.8 L43.7 175.5 L40.8 181.3 L37.9 187.3 L34.7 193.4 L31.5 199.6 L28.1 205.9 L24.5 212.3 L20.9 218.9 L17.0 225.6 L13.0 232.5 L8.8 239.5 L4.5 246.7 L0.0 254.0"/><path d="M90.0 85.0 L88.5 89.5 L86.9 94.1 L85.3 98.7 L83.6 103.3 L81.9 108.1 L80.1 112.8 L78.2 117.7 L76.2 122.7 L74.2 127.7 L72.0 132.8 L69.7 138.0 L67.4 143.4 L64.9 148.8 L62.3 154.4 L59.6 160.1 L56.8 166.0 L53.8 172.0 L50.7 178.1 L47.4 184.4 L44.0 190.9 L40.4 197.5 L36.7 204.3 L32.8 211.3 L28.7 218.5 L24.4 225.9 L19.9 233.4 L15.2 241.2 L10.4 249.3 L5.3 257.5 L0.0 266.0"/></g></svg>
<svg style="position:absolute;left:0;top:0" width="221" height="790"><g stroke="#3b3d48" stroke-width="1"><path opacity="1" d="M55.3 134.6H65.3M60.3 129.6V139.6"/><path opacity="1" d="M55.3 210.8H65.3M60.3 205.8V215.8"/><path opacity="1" d="M55.3 287.0H65.3M60.3 282.0V292.0"/><path opacity="1" d="M55.3 363.2H65.3M60.3 358.2V368.2"/><path opacity="1" d="M55.3 439.4H65.3M60.3 434.4V444.4"/><path opacity="1" d="M55.3 515.6H65.3M60.3 510.6V520.6"/><path opacity="1" d="M55.3 591.8H65.3M60.3 586.8V596.8"/><path opacity="0.55" d="M55.3 668.0H65.3M60.3 663.0V673.0"/><path opacity="1" d="M135.3 134.6H145.3M140.3 129.6V139.6"/><path opacity="1" d="M135.3 210.8H145.3M140.3 205.8V215.8"/><path opacity="1" d="M135.3 287.0H145.3M140.3 282.0V292.0"/><path opacity="1" d="M135.3 363.2H145.3M140.3 358.2V368.2"/><path opacity="1" d="M135.3 439.4H145.3M140.3 434.4V444.4"/><path opacity="1" d="M135.3 515.6H145.3M140.3 510.6V520.6"/><path opacity="1" d="M135.3 591.8H145.3M140.3 586.8V596.8"/><path opacity="0.55" d="M135.3 668.0H145.3M140.3 663.0V673.0"/><path opacity="1" d="M215.3 134.6H225.3M220.3 129.6V139.6"/><path opacity="1" d="M215.3 210.8H225.3M220.3 205.8V215.8"/><path opacity="1" d="M215.3 287.0H225.3M220.3 282.0V292.0"/><path opacity="1" d="M215.3 363.2H225.3M220.3 358.2V368.2"/><path opacity="1" d="M215.3 439.4H225.3M220.3 434.4V444.4"/><path opacity="1" d="M215.3 515.6H225.3M220.3 510.6V520.6"/><path opacity="1" d="M215.3 591.8H225.3M220.3 586.8V596.8"/><path opacity="0.55" d="M215.3 668.0H225.3M220.3 663.0V673.0"/></g></svg>
<svg style="position:absolute;left:19px;top:128px" width="19" height="15" viewBox="0 0 19 15" fill="none"><g stroke="#a9a9b3" stroke-width="1.7" stroke-linecap="round"><path d="M1.9 2.2H17.3M1.9 7.6H17.3M1.9 13H17.3"/></g></svg>
<svg style="position:absolute;left:19px;top:207px" width="19" height="20" viewBox="0 0 19 20" fill="none"><g stroke="#8f8f9a" stroke-width="1.6"><rect x="1.65" y="1.8" width="5.45" height="8" rx="1.2"/><rect x="10.7" y="1.8" width="5.7" height="5.2" rx="1.2"/><rect x="1.65" y="13" width="5.45" height="5.3" rx="1.2"/><rect x="10.7" y="10.2" width="5.7" height="8.1" rx="1.2"/></g></svg>
<svg style="position:absolute;left:19px;top:262px" width="19" height="19" viewBox="0 0 19 19" fill="none"><g stroke="#8f8f9a" stroke-width="1.6" stroke-linecap="round" stroke-linejoin="round"><path d="M11.2 1.6H16V15.9H11.2"/><path d="M3.2 4H8.2M6.2 2L8.2 4L6.2 6"/><path d="M1.7 9H13.2M11.1 6.9L13.2 9L11.1 11.1"/><path d="M3.2 14H8.2M6.2 12L8.2 14L6.2 16"/></g></svg>
<svg style="position:absolute;left:18px;top:316px" width="20" height="19" viewBox="0 0 20 19" fill="none"><g stroke="#8f8f9a" stroke-width="1.6"><path d="M10.00 2.80 L10.18 2.79 L10.35 2.77 L10.53 2.73 L10.72 2.68 L10.91 2.61 L11.10 2.54 L11.31 2.46 L11.52 2.37 L11.73 2.29 L11.95 2.21 L12.18 2.13 L12.41 2.07 L12.65 2.02 L12.88 1.99 L13.12 1.97 L13.35 1.97 L13.58 2.00 L13.79 2.05 L14.00 2.13 L14.20 2.23 L14.38 2.35 L14.55 2.49 L14.71 2.65 L14.84 2.84 L14.96 3.03 L15.07 3.24 L15.15 3.47 L15.23 3.69 L15.29 3.93 L15.34 4.16 L15.38 4.39 L15.42 4.62 L15.45 4.85 L15.48 5.06 L15.51 5.27 L15.55 5.47 L15.60 5.65 L15.65 5.83 L15.72 5.99 L15.80 6.15 L15.90 6.30 L16.01 6.44 L16.13 6.58 L16.27 6.71 L16.42 6.84 L16.58 6.97 L16.75 7.11 L16.93 7.25 L17.11 7.39 L17.29 7.55 L17.47 7.71 L17.64 7.88 L17.80 8.05 L17.95 8.24 L18.08 8.44 L18.19 8.64 L18.28 8.85 L18.35 9.06 L18.39 9.28 L18.40 9.50 L18.39 9.72 L18.35 9.94 L18.28 10.15 L18.19 10.36 L18.08 10.56 L17.95 10.76 L17.80 10.95 L17.64 11.12 L17.47 11.29 L17.29 11.45 L17.11 11.61 L16.93 11.75 L16.75 11.89 L16.58 12.03 L16.42 12.16 L16.27 12.29 L16.13 12.42 L16.01 12.56 L15.90 12.70 L15.80 12.85 L15.72 13.01 L15.65 13.17 L15.60 13.35 L15.55 13.53 L15.51 13.73 L15.48 13.94 L15.45 14.15 L15.42 14.38 L15.38 14.61 L15.34 14.84 L15.29 15.07 L15.23 15.31 L15.15 15.53 L15.07 15.76 L14.96 15.97 L14.84 16.16 L14.71 16.35 L14.55 16.51 L14.38 16.65 L14.20 16.77 L14.00 16.87 L13.79 16.95 L13.58 17.00 L13.35 17.03 L13.12 17.03 L12.88 17.01 L12.65 16.98 L12.41 16.93 L12.18 16.87 L11.95 16.79 L11.73 16.71 L11.52 16.63 L11.31 16.54 L11.10 16.46 L10.91 16.39 L10.72 16.32 L10.53 16.27 L10.35 16.23 L10.18 16.21 L10.00 16.20 L9.82 16.21 L9.65 16.23 L9.47 16.27 L9.28 16.32 L9.09 16.39 L8.90 16.46 L8.69 16.54 L8.48 16.63 L8.27 16.71 L8.05 16.79 L7.82 16.87 L7.59 16.93 L7.35 16.98 L7.12 17.01 L6.88 17.03 L6.65 17.03 L6.42 17.00 L6.21 16.95 L6.00 16.87 L5.80 16.77 L5.62 16.65 L5.45 16.51 L5.29 16.35 L5.16 16.16 L5.04 15.97 L4.93 15.76 L4.85 15.53 L4.77 15.31 L4.71 15.07 L4.66 14.84 L4.62 14.61 L4.58 14.38 L4.55 14.15 L4.52 13.94 L4.49 13.73 L4.45 13.53 L4.40 13.35 L4.35 13.17 L4.28 13.01 L4.20 12.85 L4.10 12.70 L3.99 12.56 L3.87 12.42 L3.73 12.29 L3.58 12.16 L3.42 12.03 L3.25 11.89 L3.07 11.75 L2.89 11.61 L2.71 11.45 L2.53 11.29 L2.36 11.12 L2.20 10.95 L2.05 10.76 L1.92 10.56 L1.81 10.36 L1.72 10.15 L1.65 9.94 L1.61 9.72 L1.60 9.50 L1.61 9.28 L1.65 9.06 L1.72 8.85 L1.81 8.64 L1.92 8.44 L2.05 8.24 L2.20 8.05 L2.36 7.88 L2.53 7.71 L2.71 7.55 L2.89 7.39 L3.07 7.25 L3.25 7.11 L3.42 6.97 L3.58 6.84 L3.73 6.71 L3.87 6.58 L3.99 6.44 L4.10 6.30 L4.20 6.15 L4.28 5.99 L4.35 5.83 L4.40 5.65 L4.45 5.47 L4.49 5.27 L4.52 5.06 L4.55 4.85 L4.58 4.62 L4.62 4.39 L4.66 4.16 L4.71 3.93 L4.77 3.69 L4.85 3.47 L4.93 3.24 L5.04 3.03 L5.16 2.84 L5.29 2.65 L5.45 2.49 L5.62 2.35 L5.80 2.23 L6.00 2.13 L6.21 2.05 L6.42 2.00 L6.65 1.97 L6.88 1.97 L7.12 1.99 L7.35 2.02 L7.59 2.07 L7.82 2.13 L8.05 2.21 L8.27 2.29 L8.48 2.37 L8.69 2.46 L8.90 2.54 L9.09 2.61 L9.28 2.68 L9.47 2.73 L9.65 2.77 L9.82 2.79 L10.00 2.80Z"/><circle cx="10" cy="9.5" r="3"/></g></svg>
<svg style="position:absolute;left:0;top:0;overflow:visible" width="1" height="1"><path d="M28.25 370.57 Q26.14 373.61 21.47 373.89 C21.47 381.07 24.02 384.81 28.25 387.21 C32.48 384.81 35.03 381.07 35.03 373.89 Q30.36 373.61 28.25 370.57Z" stroke="#2fc6d2" stroke-width="1.7" stroke-linejoin="miter" fill="none"/><path d="M25.68 379.64 L27.56 381.64 L31.57 377.34" stroke="#2fc6d2" stroke-width="1.7" stroke-linecap="round" stroke-linejoin="round" fill="none"/></svg>
<svg style="position:absolute;left:18px;top:423px" width="20" height="20" viewBox="0 0 20 20" fill="none"><g stroke="#8f8f9a" stroke-width="1.6" stroke-linecap="round" fill="none"><path d="M4.6 7.5C4.6 4.2 7 2.2 10 2.2S15.4 4.2 15.4 7.5"/><path d="M3.2 6.2H4.1V13.3H3.2C2 13.3 1.5 12.3 1.5 11V8.5C1.5 7.2 2 6.2 3.2 6.2Z"/><path d="M16.8 6.2H15.9V13.3H16.8C18 13.3 18.5 12.3 18.5 11V8.5C18.5 7.2 18 6.2 16.8 6.2Z"/><path d="M7.5 11.8C9 12.8 11 12.8 12.5 11.8"/><path d="M15.9 13.5C15.9 16 13.6 17.3 10.2 17.5"/></g></svg>
<svg style="position:absolute;left:17px;top:754px" width="23" height="23" viewBox="0 0 23 23" fill="none"><circle cx="11.55" cy="11.1" r="10.1" stroke="#a0a0ac" stroke-width="1.7"/><circle cx="11.4" cy="7.2" r="3.4" fill="#a0a0ac"/><path d="M4.2 18.2C5.8 14.8 8.5 12.7 11.5 12.7S17.2 14.8 18.8 18.2C17 20.3 14.5 21.3 11.5 21.3S6 20.3 4.2 18.2Z" fill="#a0a0ac"/></svg>
<svg style="position:absolute;left:170px;top:748px" width="40" height="34" viewBox="0 0 40 34" fill="none"><path d="M21.8 7.8Q21.8 7 22.6 7.1L29.2 8.1Q30 8.3 30 9.1V24.9Q30 25.7 29.2 25.9L22.6 26.9Q21.8 27 21.8 26.2Z" fill="#a0a0ac"/><g stroke="#a0a0ac" stroke-width="1.9" stroke-linecap="round" stroke-linejoin="round" fill="none"><path d="M16.2 12V10.6Q16.2 9.15 17.6 9.15H18.9"/><path d="M16.2 22.3V23Q16.2 24.45 17.6 24.45H18.9"/><path d="M9.2 17H18.9M12.9 13.3L9.2 17L12.9 20.7"/></g></svg>
<svg style="position:absolute;left:0;top:0;overflow:visible" width="1" height="1"><path d="M249.60 18.20 Q246.30 23.06 239.00 23.49 C239.00 34.99 242.99 40.95 249.60 44.79 C256.21 40.95 260.20 34.99 260.20 23.49 Q252.90 23.06 249.60 18.20Z" stroke="#2fc6d2" stroke-width="2.3" stroke-linejoin="miter" fill="none"/><path d="M245.59 32.69 L248.51 35.89 L254.79 29.02" stroke="#2fc6d2" stroke-width="2.3" stroke-linecap="round" stroke-linejoin="round" fill="none"/></svg>
<svg style="position:absolute;left:917px;top:22px" width="23" height="21" viewBox="0 0 23 21" fill="none"><g stroke="#ffffff" stroke-width="1.6"><path d="M3.5 1V9.5M3.5 15V20"/><circle cx="3.5" cy="12.3" r="2.3"/><path d="M11.5 1V4M11.5 9.5V20"/><circle cx="11.5" cy="6.7" r="2.3"/><path d="M19 1V11.5M19 17V20"/><circle cx="19" cy="14.3" r="2.3"/></g></svg>
<svg style="position:absolute;left:1045px;top:29px" width="14" height="10" viewBox="0 0 14 10" fill="none"><path d="M2 2.5L7 7.5L12 2.5" stroke="#ffffff" stroke-width="1.8" stroke-linecap="round" stroke-linejoin="round"/></svg>
<svg style="position:absolute;left:807px;top:138px" width="22" height="22" viewBox="0 0 22 22" fill="none"><circle cx="9.5" cy="9.5" r="6.7" stroke="#a3a3ad" stroke-width="1.7"/><path d="M14.4 14.4L19.5 19.5" stroke="#a3a3ad" stroke-width="1.8" stroke-linecap="round"/></svg>
<svg style="position:absolute;left:897px;top:131px" width="17" height="14" viewBox="0 0 17 14" fill="none"><g stroke="#9a9aa6" stroke-width="1.3" stroke-linecap="round" stroke-linejoin="round" fill="none"><path d="M2.6 12.2V2.4M0.9 4.2L2.6 2.4L4.3 4.2"/><path d="M6.9 3.8H8.6M6.9 7.7H11.6M6.9 11.6H14.3"/></g></svg>
<svg style="position:absolute;left:909px;top:152px" width="12" height="9" viewBox="0 0 12 9" fill="none"><path d="M1.8 2L6 6.5L10.2 2" stroke="#ffffff" stroke-width="1.7" stroke-linecap="round" stroke-linejoin="round"/></svg>
<svg style="position:absolute;left:307px;top:208px" width="20" height="20" viewBox="0 0 20 20" fill="none"><circle cx="10" cy="10" r="8.2" stroke="#5fe07d" stroke-width="1.6"/><path d="M6.2 10.5L9.4 14L13.6 6.8" stroke="#5fe07d" stroke-width="1.6" stroke-linecap="round" stroke-linejoin="round"/></svg>
<svg style="position:absolute;left:306.4px;top:298.8px" width="20" height="20" viewBox="0 0 20 20" fill="none"><circle cx="10" cy="10" r="8.45" stroke="#e6e6ee" stroke-width="1.6"/><path d="M8.1 9.6V6.8A1.55 1.55 0 0 1 11.2 6.8V9.6" stroke="#e6e6ee" stroke-width="1.4" fill="none"/><path fill-rule="evenodd" d="M6.6 9.2H12.7Q13.1 9.2 13.1 9.6V14Q13.1 14.4 12.7 14.4H6.6Q6.2 14.4 6.2 14V9.6Q6.2 9.2 6.6 9.2ZM7.9 10.7H11.3V12.4H7.9Z" fill="#e6e6ee"/></svg>
<svg style="position:absolute;left:306.4px;top:382.1px" width="20" height="20" viewBox="0 0 20 20" fill="none"><circle cx="10" cy="10" r="8.45" stroke="#e6e6ee" stroke-width="1.6"/><path d="M8.1 9.6V6.8A1.55 1.55 0 0 1 11.2 6.8V9.6" stroke="#e6e6ee" stroke-width="1.4" fill="none"/><path fill-rule="evenodd" d="M6.6 9.2H12.7Q13.1 9.2 13.1 9.6V14Q13.1 14.4 12.7 14.4H6.6Q6.2 14.4 6.2 14V9.6Q6.2 9.2 6.6 9.2ZM7.9 10.7H11.3V12.4H7.9Z" fill="#e6e6ee"/></svg>
<svg style="position:absolute;left:929px;top:219.2px" width="24" height="23" viewBox="0 0 24 23" fill="none"><g stroke="#5e5e6a" stroke-width="1.6"><path d="M12.00 3.40 L12.21 3.39 L12.43 3.35 L12.65 3.30 L12.87 3.23 L13.10 3.14 L13.34 3.03 L13.59 2.92 L13.85 2.80 L14.12 2.68 L14.39 2.57 L14.68 2.46 L14.97 2.36 L15.26 2.29 L15.56 2.23 L15.85 2.20 L16.14 2.20 L16.42 2.23 L16.70 2.28 L16.96 2.37 L17.20 2.49 L17.43 2.64 L17.63 2.83 L17.82 3.03 L17.98 3.26 L18.13 3.52 L18.25 3.79 L18.35 4.07 L18.43 4.36 L18.49 4.66 L18.54 4.96 L18.58 5.26 L18.61 5.55 L18.64 5.83 L18.66 6.10 L18.69 6.36 L18.73 6.61 L18.78 6.84 L18.84 7.06 L18.92 7.26 L19.01 7.45 L19.13 7.63 L19.27 7.80 L19.42 7.96 L19.60 8.12 L19.79 8.27 L20.00 8.43 L20.23 8.59 L20.46 8.75 L20.70 8.92 L20.93 9.11 L21.17 9.30 L21.40 9.50 L21.61 9.72 L21.80 9.95 L21.98 10.19 L22.12 10.44 L22.24 10.69 L22.33 10.96 L22.38 11.23 L22.40 11.50 L22.38 11.77 L22.33 12.04 L22.24 12.31 L22.12 12.56 L21.98 12.81 L21.80 13.05 L21.61 13.28 L21.40 13.50 L21.17 13.70 L20.93 13.89 L20.70 14.08 L20.46 14.25 L20.23 14.41 L20.00 14.57 L19.79 14.73 L19.60 14.88 L19.42 15.04 L19.27 15.20 L19.13 15.37 L19.01 15.55 L18.92 15.74 L18.84 15.94 L18.78 16.16 L18.73 16.39 L18.69 16.64 L18.66 16.90 L18.64 17.17 L18.61 17.45 L18.58 17.74 L18.54 18.04 L18.49 18.34 L18.43 18.64 L18.35 18.93 L18.25 19.21 L18.13 19.48 L17.98 19.74 L17.82 19.97 L17.63 20.17 L17.43 20.36 L17.20 20.51 L16.96 20.63 L16.70 20.72 L16.42 20.77 L16.14 20.80 L15.85 20.80 L15.56 20.77 L15.26 20.71 L14.97 20.64 L14.68 20.54 L14.39 20.43 L14.12 20.32 L13.85 20.20 L13.59 20.08 L13.34 19.97 L13.10 19.86 L12.87 19.77 L12.65 19.70 L12.43 19.65 L12.21 19.61 L12.00 19.60 L11.79 19.61 L11.57 19.65 L11.35 19.70 L11.13 19.77 L10.90 19.86 L10.66 19.97 L10.41 20.08 L10.15 20.20 L9.88 20.32 L9.61 20.43 L9.32 20.54 L9.03 20.64 L8.74 20.71 L8.44 20.77 L8.15 20.80 L7.86 20.80 L7.58 20.77 L7.30 20.72 L7.04 20.63 L6.80 20.51 L6.57 20.36 L6.37 20.17 L6.18 19.97 L6.02 19.74 L5.87 19.48 L5.75 19.21 L5.65 18.93 L5.57 18.64 L5.51 18.34 L5.46 18.04 L5.42 17.74 L5.39 17.45 L5.36 17.17 L5.34 16.90 L5.31 16.64 L5.27 16.39 L5.22 16.16 L5.16 15.94 L5.08 15.74 L4.99 15.55 L4.87 15.37 L4.73 15.20 L4.58 15.04 L4.40 14.88 L4.21 14.73 L4.00 14.57 L3.77 14.41 L3.54 14.25 L3.30 14.08 L3.07 13.89 L2.83 13.70 L2.60 13.50 L2.39 13.28 L2.20 13.05 L2.02 12.81 L1.88 12.56 L1.76 12.31 L1.67 12.04 L1.62 11.77 L1.60 11.50 L1.62 11.23 L1.67 10.96 L1.76 10.69 L1.88 10.44 L2.02 10.19 L2.20 9.95 L2.39 9.72 L2.60 9.50 L2.83 9.30 L3.07 9.11 L3.30 8.92 L3.54 8.75 L3.77 8.59 L4.00 8.43 L4.21 8.27 L4.40 8.12 L4.58 7.96 L4.73 7.80 L4.87 7.63 L4.99 7.45 L5.08 7.26 L5.16 7.06 L5.22 6.84 L5.27 6.61 L5.31 6.36 L5.34 6.10 L5.36 5.83 L5.39 5.55 L5.42 5.26 L5.46 4.96 L5.51 4.66 L5.57 4.36 L5.65 4.07 L5.75 3.79 L5.87 3.52 L6.02 3.26 L6.18 3.03 L6.37 2.83 L6.57 2.64 L6.80 2.49 L7.04 2.37 L7.30 2.28 L7.58 2.23 L7.86 2.20 L8.15 2.20 L8.44 2.23 L8.74 2.29 L9.03 2.36 L9.32 2.46 L9.61 2.57 L9.88 2.68 L10.15 2.80 L10.41 2.92 L10.66 3.03 L10.90 3.14 L11.13 3.23 L11.35 3.30 L11.57 3.35 L11.79 3.39 L12.00 3.40Z"/><circle cx="12" cy="11.5" r="3.5"/></g></svg>
<svg style="position:absolute;left:929px;top:309.3px" width="24" height="23" viewBox="0 0 24 23" fill="none"><g stroke="#5e5e6a" stroke-width="1.6"><path d="M12.00 3.40 L12.21 3.39 L12.43 3.35 L12.65 3.30 L12.87 3.23 L13.10 3.14 L13.34 3.03 L13.59 2.92 L13.85 2.80 L14.12 2.68 L14.39 2.57 L14.68 2.46 L14.97 2.36 L15.26 2.29 L15.56 2.23 L15.85 2.20 L16.14 2.20 L16.42 2.23 L16.70 2.28 L16.96 2.37 L17.20 2.49 L17.43 2.64 L17.63 2.83 L17.82 3.03 L17.98 3.26 L18.13 3.52 L18.25 3.79 L18.35 4.07 L18.43 4.36 L18.49 4.66 L18.54 4.96 L18.58 5.26 L18.61 5.55 L18.64 5.83 L18.66 6.10 L18.69 6.36 L18.73 6.61 L18.78 6.84 L18.84 7.06 L18.92 7.26 L19.01 7.45 L19.13 7.63 L19.27 7.80 L19.42 7.96 L19.60 8.12 L19.79 8.27 L20.00 8.43 L20.23 8.59 L20.46 8.75 L20.70 8.92 L20.93 9.11 L21.17 9.30 L21.40 9.50 L21.61 9.72 L21.80 9.95 L21.98 10.19 L22.12 10.44 L22.24 10.69 L22.33 10.96 L22.38 11.23 L22.40 11.50 L22.38 11.77 L22.33 12.04 L22.24 12.31 L22.12 12.56 L21.98 12.81 L21.80 13.05 L21.61 13.28 L21.40 13.50 L21.17 13.70 L20.93 13.89 L20.70 14.08 L20.46 14.25 L20.23 14.41 L20.00 14.57 L19.79 14.73 L19.60 14.88 L19.42 15.04 L19.27 15.20 L19.13 15.37 L19.01 15.55 L18.92 15.74 L18.84 15.94 L18.78 16.16 L18.73 16.39 L18.69 16.64 L18.66 16.90 L18.64 17.17 L18.61 17.45 L18.58 17.74 L18.54 18.04 L18.49 18.34 L18.43 18.64 L18.35 18.93 L18.25 19.21 L18.13 19.48 L17.98 19.74 L17.82 19.97 L17.63 20.17 L17.43 20.36 L17.20 20.51 L16.96 20.63 L16.70 20.72 L16.42 20.77 L16.14 20.80 L15.85 20.80 L15.56 20.77 L15.26 20.71 L14.97 20.64 L14.68 20.54 L14.39 20.43 L14.12 20.32 L13.85 20.20 L13.59 20.08 L13.34 19.97 L13.10 19.86 L12.87 19.77 L12.65 19.70 L12.43 19.65 L12.21 19.61 L12.00 19.60 L11.79 19.61 L11.57 19.65 L11.35 19.70 L11.13 19.77 L10.90 19.86 L10.66 19.97 L10.41 20.08 L10.15 20.20 L9.88 20.32 L9.61 20.43 L9.32 20.54 L9.03 20.64 L8.74 20.71 L8.44 20.77 L8.15 20.80 L7.86 20.80 L7.58 20.77 L7.30 20.72 L7.04 20.63 L6.80 20.51 L6.57 20.36 L6.37 20.17 L6.18 19.97 L6.02 19.74 L5.87 19.48 L5.75 19.21 L5.65 18.93 L5.57 18.64 L5.51 18.34 L5.46 18.04 L5.42 17.74 L5.39 17.45 L5.36 17.17 L5.34 16.90 L5.31 16.64 L5.27 16.39 L5.22 16.16 L5.16 15.94 L5.08 15.74 L4.99 15.55 L4.87 15.37 L4.73 15.20 L4.58 15.04 L4.40 14.88 L4.21 14.73 L4.00 14.57 L3.77 14.41 L3.54 14.25 L3.30 14.08 L3.07 13.89 L2.83 13.70 L2.60 13.50 L2.39 13.28 L2.20 13.05 L2.02 12.81 L1.88 12.56 L1.76 12.31 L1.67 12.04 L1.62 11.77 L1.60 11.50 L1.62 11.23 L1.67 10.96 L1.76 10.69 L1.88 10.44 L2.02 10.19 L2.20 9.95 L2.39 9.72 L2.60 9.50 L2.83 9.30 L3.07 9.11 L3.30 8.92 L3.54 8.75 L3.77 8.59 L4.00 8.43 L4.21 8.27 L4.40 8.12 L4.58 7.96 L4.73 7.80 L4.87 7.63 L4.99 7.45 L5.08 7.26 L5.16 7.06 L5.22 6.84 L5.27 6.61 L5.31 6.36 L5.34 6.10 L5.36 5.83 L5.39 5.55 L5.42 5.26 L5.46 4.96 L5.51 4.66 L5.57 4.36 L5.65 4.07 L5.75 3.79 L5.87 3.52 L6.02 3.26 L6.18 3.03 L6.37 2.83 L6.57 2.64 L6.80 2.49 L7.04 2.37 L7.30 2.28 L7.58 2.23 L7.86 2.20 L8.15 2.20 L8.44 2.23 L8.74 2.29 L9.03 2.36 L9.32 2.46 L9.61 2.57 L9.88 2.68 L10.15 2.80 L10.41 2.92 L10.66 3.03 L10.90 3.14 L11.13 3.23 L11.35 3.30 L11.57 3.35 L11.79 3.39 L12.00 3.40Z"/><circle cx="12" cy="11.5" r="3.5"/></g></svg>
<svg style="position:absolute;left:929px;top:392.5px" width="24" height="23" viewBox="0 0 24 23" fill="none"><g stroke="#5e5e6a" stroke-width="1.6"><path d="M12.00 3.40 L12.21 3.39 L12.43 3.35 L12.65 3.30 L12.87 3.23 L13.10 3.14 L13.34 3.03 L13.59 2.92 L13.85 2.80 L14.12 2.68 L14.39 2.57 L14.68 2.46 L14.97 2.36 L15.26 2.29 L15.56 2.23 L15.85 2.20 L16.14 2.20 L16.42 2.23 L16.70 2.28 L16.96 2.37 L17.20 2.49 L17.43 2.64 L17.63 2.83 L17.82 3.03 L17.98 3.26 L18.13 3.52 L18.25 3.79 L18.35 4.07 L18.43 4.36 L18.49 4.66 L18.54 4.96 L18.58 5.26 L18.61 5.55 L18.64 5.83 L18.66 6.10 L18.69 6.36 L18.73 6.61 L18.78 6.84 L18.84 7.06 L18.92 7.26 L19.01 7.45 L19.13 7.63 L19.27 7.80 L19.42 7.96 L19.60 8.12 L19.79 8.27 L20.00 8.43 L20.23 8.59 L20.46 8.75 L20.70 8.92 L20.93 9.11 L21.17 9.30 L21.40 9.50 L21.61 9.72 L21.80 9.95 L21.98 10.19 L22.12 10.44 L22.24 10.69 L22.33 10.96 L22.38 11.23 L22.40 11.50 L22.38 11.77 L22.33 12.04 L22.24 12.31 L22.12 12.56 L21.98 12.81 L21.80 13.05 L21.61 13.28 L21.40 13.50 L21.17 13.70 L20.93 13.89 L20.70 14.08 L20.46 14.25 L20.23 14.41 L20.00 14.57 L19.79 14.73 L19.60 14.88 L19.42 15.04 L19.27 15.20 L19.13 15.37 L19.01 15.55 L18.92 15.74 L18.84 15.94 L18.78 16.16 L18.73 16.39 L18.69 16.64 L18.66 16.90 L18.64 17.17 L18.61 17.45 L18.58 17.74 L18.54 18.04 L18.49 18.34 L18.43 18.64 L18.35 18.93 L18.25 19.21 L18.13 19.48 L17.98 19.74 L17.82 19.97 L17.63 20.17 L17.43 20.36 L17.20 20.51 L16.96 20.63 L16.70 20.72 L16.42 20.77 L16.14 20.80 L15.85 20.80 L15.56 20.77 L15.26 20.71 L14.97 20.64 L14.68 20.54 L14.39 20.43 L14.12 20.32 L13.85 20.20 L13.59 20.08 L13.34 19.97 L13.10 19.86 L12.87 19.77 L12.65 19.70 L12.43 19.65 L12.21 19.61 L12.00 19.60 L11.79 19.61 L11.57 19.65 L11.35 19.70 L11.13 19.77 L10.90 19.86 L10.66 19.97 L10.41 20.08 L10.15 20.20 L9.88 20.32 L9.61 20.43 L9.32 20.54 L9.03 20.64 L8.74 20.71 L8.44 20.77 L8.15 20.80 L7.86 20.80 L7.58 20.77 L7.30 20.72 L7.04 20.63 L6.80 20.51 L6.57 20.36 L6.37 20.17 L6.18 19.97 L6.02 19.74 L5.87 19.48 L5.75 19.21 L5.65 18.93 L5.57 18.64 L5.51 18.34 L5.46 18.04 L5.42 17.74 L5.39 17.45 L5.36 17.17 L5.34 16.90 L5.31 16.64 L5.27 16.39 L5.22 16.16 L5.16 15.94 L5.08 15.74 L4.99 15.55 L4.87 15.37 L4.73 15.20 L4.58 15.04 L4.40 14.88 L4.21 14.73 L4.00 14.57 L3.77 14.41 L3.54 14.25 L3.30 14.08 L3.07 13.89 L2.83 13.70 L2.60 13.50 L2.39 13.28 L2.20 13.05 L2.02 12.81 L1.88 12.56 L1.76 12.31 L1.67 12.04 L1.62 11.77 L1.60 11.50 L1.62 11.23 L1.67 10.96 L1.76 10.69 L1.88 10.44 L2.02 10.19 L2.20 9.95 L2.39 9.72 L2.60 9.50 L2.83 9.30 L3.07 9.11 L3.30 8.92 L3.54 8.75 L3.77 8.59 L4.00 8.43 L4.21 8.27 L4.40 8.12 L4.58 7.96 L4.73 7.80 L4.87 7.63 L4.99 7.45 L5.08 7.26 L5.16 7.06 L5.22 6.84 L5.27 6.61 L5.31 6.36 L5.34 6.10 L5.36 5.83 L5.39 5.55 L5.42 5.26 L5.46 4.96 L5.51 4.66 L5.57 4.36 L5.65 4.07 L5.75 3.79 L5.87 3.52 L6.02 3.26 L6.18 3.03 L6.37 2.83 L6.57 2.64 L6.80 2.49 L7.04 2.37 L7.30 2.28 L7.58 2.23 L7.86 2.20 L8.15 2.20 L8.44 2.23 L8.74 2.29 L9.03 2.36 L9.32 2.46 L9.61 2.57 L9.88 2.68 L10.15 2.80 L10.41 2.92 L10.66 3.03 L10.90 3.14 L11.13 3.23 L11.35 3.30 L11.57 3.35 L11.79 3.39 L12.00 3.40Z"/><circle cx="12" cy="11.5" r="3.5"/></g></svg>
<svg style="position:absolute;left:1011px;top:218px" width="21" height="26" viewBox="0 0 21 26" fill="none"><g stroke="#4d4d58" stroke-width="1.6" fill="none"><rect x="2.8" y="12.3" width="15" height="10.9" rx="1.5"/><path d="M6.1 4.9A4.65 4.65 0 0 1 14.6 7.45V12.3"/></g><circle cx="9.9" cy="17.4" r="1.5" fill="#4d4d58"/></svg>
<svg style="position:absolute;left:1011px;top:309px" width="22" height="25" viewBox="0 0 22 25" fill="none"><g stroke="#686874" stroke-width="1.6" fill="none"><rect x="3.6" y="9.6" width="14.7" height="12.5" rx="1.5"/><path d="M6.3 9.6V6.2A4.65 4.65 0 0 1 15.6 6.2V9.6"/></g><circle cx="10.95" cy="15.9" r="1.5" fill="#686874"/></svg>
<svg style="position:absolute;left:1011px;top:392.9px" width="22" height="25" viewBox="0 0 22 25" fill="none"><g stroke="#686874" stroke-width="1.6" fill="none"><rect x="3.6" y="9.6" width="14.7" height="12.5" rx="1.5"/><path d="M6.3 9.6V6.2A4.65 4.65 0 0 1 15.6 6.2V9.6"/></g><circle cx="10.95" cy="15.9" r="1.5" fill="#686874"/></svg>
<div class="t" style="left:17.5px;top:18.35px;font-size:14px;font-weight:700;color:#ffffff;letter-spacing:1.6px;-webkit-text-stroke:0.45px #25252b;">H&Lambda;IVISION</div>
<div class="t" style="left:15.5px;top:33.31px;font-size:32px;font-weight:400;color:#ffffff;letter-spacing:0.3px;-webkit-text-stroke:0.7px #25252b;transform:scaleX(1.055);transform-origin:0 0;">Makito</div>
<div class="t" style="left:121.3px;top:33.31px;font-size:32px;font-weight:400;color:#ffffff;letter-spacing:0.5px;-webkit-text-stroke:0.7px #25252b;transform:scaleX(1.08);transform-origin:0 0;">FX</div>
<div class="t" style="left:17.5px;top:69.87px;font-size:14.8px;font-weight:700;color:#2fc6d2;letter-spacing:0px;-webkit-text-stroke:0.4px #25252b;">ENCODER</div>
<div class="t" style="left:54px;top:210.30px;font-size:15px;font-weight:700;color:#a3a3b0;letter-spacing:0.45px;-webkit-text-stroke:0.35px #25252b;">Dashboard</div>
<div class="t" style="left:54px;top:264.30px;font-size:15px;font-weight:700;color:#a3a3b0;letter-spacing:0.45px;-webkit-text-stroke:0.35px #25252b;">Streaming</div>
<div class="t" style="left:54px;top:318.30px;font-size:15px;font-weight:700;color:#a3a3b0;letter-spacing:0.45px;-webkit-text-stroke:0.35px #25252b;">Settings</div>
<div class="t" style="left:54px;top:372.30px;font-size:15px;font-weight:700;color:#ffffff;letter-spacing:0.4px;-webkit-text-stroke:0.35px #25252b;">Security</div>
<div class="t" style="left:54px;top:426.30px;font-size:15px;font-weight:700;color:#a3a3b0;letter-spacing:0.45px;-webkit-text-stroke:0.35px #25252b;">Help Center</div>
<div class="t" style="left:50px;top:756.60px;font-size:15px;font-weight:700;color:#a8a8b4;letter-spacing:0.4px;-webkit-text-stroke:0.35px #25252b;">admin</div>
<div class="t" style="left:276.5px;top:21.72px;font-size:19px;font-weight:700;color:#ffffff;letter-spacing:0.1px;-webkit-text-stroke:0.4px #1f2022;">Security</div>
<div class="t" style="left:952.5px;top:23.02px;font-size:19px;font-weight:700;color:#ffffff;letter-spacing:-0.05px;-webkit-text-stroke:0.5px #1f2022;">startup 1</div>
<div class="t" style="left:235.5px;top:75.67px;font-size:13.5px;font-weight:400;color:#ffffff;letter-spacing:0.5px;">Accounts</div>
<div class="t" style="left:330.5px;top:75.67px;font-size:13.5px;font-weight:400;color:#9d9daa;letter-spacing:-0.1px;">Messages</div>
<div class="t" style="left:427px;top:75.67px;font-size:13.5px;font-weight:400;color:#9d9daa;letter-spacing:0.3px;">Banner</div>
<div class="t" style="left:507.5px;top:75.67px;font-size:13.5px;font-weight:400;color:#9d9daa;letter-spacing:0.35px;">Policies</div>
<div class="t" style="left:592px;top:75.67px;font-size:13.5px;font-weight:400;color:#9d9daa;letter-spacing:0.3px;">Certificates</div>
<div class="t" style="left:699px;top:75.67px;font-size:13.5px;font-weight:400;color:#9d9daa;letter-spacing:1.0px;">Audit</div>
<div class="t" style="left:301.8px;top:143.27px;font-size:11.5px;font-weight:700;color:#5fe07d;letter-spacing:0px;">06</div>
<div class="t" style="left:337px;top:143.27px;font-size:11.5px;font-weight:700;color:#5fe07d;letter-spacing:-0.1px;">ACTIVE</div>
<div class="t" style="left:420px;top:143.27px;font-size:11.5px;font-weight:400;color:#5d5f6c;letter-spacing:0px;">00</div>
<div class="t" style="left:455px;top:143.27px;font-size:11.5px;font-weight:400;color:#5d5f6c;letter-spacing:0px;">LOCKED</div>
<div class="t" style="left:544.6px;top:143.27px;font-size:11.5px;font-weight:400;color:#5d5f6c;letter-spacing:0px;">00</div>
<div class="t" style="left:579px;top:143.27px;font-size:11.5px;font-weight:400;color:#5d5f6c;letter-spacing:0.1px;">DISABLED</div>
<div class="t" style="left:862px;top:131.00px;font-size:13px;font-weight:400;color:#9a9aa6;letter-spacing:0.8px;">Sort</div>
<div class="t" style="left:862px;top:149.00px;font-size:13px;font-weight:700;color:#ffffff;letter-spacing:0.45px;-webkit-text-stroke:0.4px #1f2022;">Name</div>
<div class="t" style="left:958.8px;top:143.27px;font-size:11.5px;font-weight:700;color:#ffffff;letter-spacing:0.05px;-webkit-text-stroke:0.3px #1f6fe8;">ADD ACCOUNT</div>
<div class="t" style="left:335px;top:208.01px;font-size:17px;font-weight:700;color:#ffffff;letter-spacing:0.1px;-webkit-text-stroke:0.3px #33343d;">admin</div>
<div class="t" style="left:308px;top:236.90px;font-size:13px;font-weight:400;color:#a7a7b5;letter-spacing:0.72px;">Administrator</div>
<div class="t" style="left:413.3px;top:236.90px;font-size:13px;font-weight:400;color:#a7a7b5;letter-spacing:0.43px;">Password Expiration: Never</div>
<div class="t" style="left:335px;top:298.61px;font-size:17px;font-weight:700;color:#ffffff;letter-spacing:0.30000000000000004px;-webkit-text-stroke:0.3px #33343d;">operator</div>
<div class="t" style="left:308px;top:327.90px;font-size:13px;font-weight:400;color:#a7a7b5;letter-spacing:0.62px;">Operator</div>
<div class="t" style="left:384.0px;top:327.90px;font-size:13px;font-weight:400;color:#a7a7b5;letter-spacing:0.53px;">Password Expiration: By Administrator</div>
<div class="t" style="left:335px;top:381.61px;font-size:17px;font-weight:700;color:#ffffff;letter-spacing:-0.5px;-webkit-text-stroke:0.3px #33343d;">user</div>
<div class="t" style="left:308px;top:410.80px;font-size:13px;font-weight:400;color:#a7a7b5;letter-spacing:0.05px;">Guest</div>
<div class="t" style="left:363.7px;top:410.80px;font-size:13px;font-weight:400;color:#a7a7b5;letter-spacing:0.53px;">Password Expiration: By Administrator</div>
</body></html>
